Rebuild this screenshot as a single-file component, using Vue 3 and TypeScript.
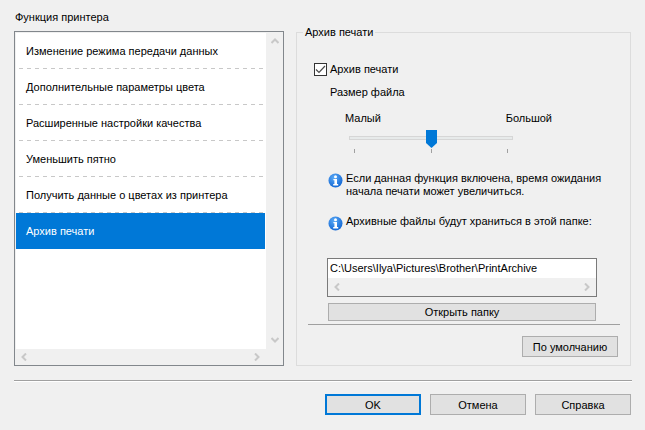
<script setup lang="ts">
const items: string[] = [
  'Изменение режима передачи данных',
  'Дополнительные параметры цвета',
  'Расширенные настройки качества',
  'Уменьшить пятно',
  'Получить данные о цветах из принтера',
  'Архив печати',
]
const selected = 5
</script>

<template>
  <div class="dialog">
    <div class="title">Функция принтера</div>
    <div class="main">
      <div class="listbox">
        <div class="list-view">
          <ul class="list">
            <li v-for="(item, i) in items" :key="item" class="row" :class="{ sel: i === selected }">
              {{ item }}
            </li>
          </ul>
          <div class="vbar">
            <svg width="8" height="6" viewBox="0 0 8 6"><path d="M0.5 5 L4 1.5 L7.5 5" class="arrow" /></svg>
            <svg width="8" height="6" viewBox="0 0 8 6"><path d="M0.5 1 L4 4.5 L7.5 1" class="arrow" /></svg>
          </div>
          <div class="hbar">
            <svg width="6" height="8" viewBox="0 0 6 8"><path d="M5 0.5 L1.5 4 L5 7.5" class="arrow" /></svg>
            <svg width="6" height="8" viewBox="0 0 6 8"><path d="M1 0.5 L4.5 4 L1 7.5" class="arrow" /></svg>
          </div>
        </div>
      </div>
      <section class="group">
        <span class="legend">Архив печати</span>
        <label class="check-row">
          <span class="checkbox">
            <svg width="11" height="11" viewBox="0 0 11 11"><path d="M1 5.5 L4 8.5 L10 2" fill="none" stroke="#4a4a4a" stroke-width="1.2" /></svg>
          </span>
          Архив печати
        </label>
        <div class="size-label">Размер файла</div>
        <div class="scale"><span>Малый</span><span>Большой</span></div>
        <svg class="slider" width="166" height="24" viewBox="0 0 166 24">
          <rect x="0.5" y="6.5" width="163" height="3" fill="#e7eaea" stroke="#d6d6d6" />
          <path d="M77 0 H88 V13 L82.5 18 L77 13 Z" fill="#0078d7" />
          <path d="M5.5 19 V23 M82.5 19 V23 M158.5 19 V23" stroke="#a0a0a0" />
        </svg>
        <div class="info two">
          <svg class="info-icon" width="15" height="15" viewBox="0 0 15 15">
            <defs>
              <radialGradient id="ig" cx="0.4" cy="0.3" r="0.8">
                <stop offset="0" stop-color="#5aa9f5" />
                <stop offset="1" stop-color="#0a5fd0" />
              </radialGradient>
            </defs>
            <circle cx="7.5" cy="7.5" r="7" fill="url(#ig)" />
            <circle cx="7.5" cy="3.8" r="1.5" fill="#fff" />
            <path d="M5.4 6 H9 V11 H10.2 V12.4 H5.2 V11 H6.4 V7.3 H5.4 Z" fill="#fff" />
          </svg>
          <p>Если данная функция включена, время ожидания<br />начала печати может увеличиться.</p>
        </div>
        <div class="info one">
          <svg class="info-icon" width="15" height="15" viewBox="0 0 15 15">
            <circle cx="7.5" cy="7.5" r="7" fill="url(#ig)" />
            <circle cx="7.5" cy="3.8" r="1.5" fill="#fff" />
            <path d="M5.4 6 H9 V11 H10.2 V12.4 H5.2 V11 H6.4 V7.3 H5.4 Z" fill="#fff" />
          </svg>
          <p>Архивные файлы будут храниться в этой папке:</p>
        </div>
        <div class="path-box">
          <div class="path-text">C:\Users\Ilya\Pictures\Brother\PrintArchive</div>
          <div class="path-bar">
            <svg width="6" height="8" viewBox="0 0 6 8"><path d="M5 0.5 L1.5 4 L5 7.5" class="arrow" /></svg>
            <svg width="6" height="8" viewBox="0 0 6 8"><path d="M1 0.5 L4.5 4 L1 7.5" class="arrow" /></svg>
          </div>
        </div>
        <button class="btn open">Открыть папку</button>
        <div class="inner-sep"></div>
        <button class="btn default">По умолчанию</button>
      </section>
    </div>
    <div class="sep"></div>
    <div class="actions">
      <button class="btn action primary">OK</button>
      <button class="btn action">Отмена</button>
      <button class="btn action">Справка</button>
    </div>
  </div>
</template>

<style>
html, body { margin: 0; background: #f0f0f0; }
</style>

<style scoped>
.dialog {
  width: 645px;
  height: 430px;
  box-sizing: border-box;
  padding: 0 14px;
  background: #f0f0f0;
  font-family: "Liberation Sans", Arial, sans-serif;
  font-size: 11px;
  color: #000;
  overflow: hidden;
}
.title { height: 31px; padding: 10px 1px 0; box-sizing: border-box; line-height: 14px; }
.main { display: flex; gap: 12px; height: 335px; }
.listbox {
  width: 270px;
  box-sizing: border-box;
  border: 1px solid #82878c;
  padding: 1px 0 0 1px;
  flex: none;
}
.list-view {
  display: grid;
  grid-template-columns: 250px 18px;
  grid-template-rows: 316px 16px;
  height: 100%;
}
.list { list-style: none; margin: 0; padding: 0 1px 0 0; background: #fff; }
.row {
  height: 36px;
  box-sizing: border-box;
  padding: 0 0 0 10px;
  line-height: 36px;
  background: repeating-linear-gradient(90deg, #c8c8c8 0 4px, transparent 4px 8px) 3px 100% / 244px 1px no-repeat;
}
.row.sel { background: #0078d7; color: #fff; }
.vbar {
  display: flex;
  flex-direction: column;
  justify-content: space-between;
  align-items: center;
  padding: 5px 0 6px;
  box-sizing: border-box;
}
.hbar, .path-bar {
  display: flex;
  justify-content: space-between;
  align-items: center;
}
.hbar { padding: 0 6px 0 5px; }
.arrow { fill: none; stroke: #c8c8c8; stroke-width: 2; }
.group {
  position: relative;
  width: 336px;
  box-sizing: border-box;
  border: 1px solid #dcdcdc;
  margin-top: 1px;
  height: 334px;
  padding-top: 27px;
}
.legend {
  position: absolute;
  left: 6px;
  top: -8px;
  padding: 0 2px;
  background: #f0f0f0;
  line-height: 14px;
}
.check-row { display: flex; align-items: center; height: 18px; margin-left: 17px; gap: 3px; }
.checkbox {
  width: 13px;
  height: 13px;
  box-sizing: border-box;
  border: 1px solid #333;
  background: #fff;
  display: flex;
  align-items: center;
  justify-content: center;
}
.size-label { height: 16px; line-height: 16px; margin: 6px 0 0 33px; }
.scale {
  display: flex;
  justify-content: space-between;
  height: 16px;
  line-height: 16px;
  margin: 10px 0 0 48px;
  width: 207px;
}
.slider { display: block; margin: 4px 0 0 52px; }
.info { display: flex; gap: 3px; margin-left: 31px; }
.info p { margin: 0; line-height: 13px; white-space: nowrap; }
.info-icon { flex: none; margin-top: 1px; }
.info.two { margin-top: 18px; height: 27px; }
.info.one { margin-top: 16px; height: 16px; }
.path-box {
  width: 270px;
  height: 39px;
  box-sizing: border-box;
  margin: 27px 0 0 30px;
  border: 1px solid #7a7a7a;
  background: #f0f0f0;
}
.path-text {
  height: 19px;
  line-height: 18px;
  padding-left: 2px;
  background: #fff;
  border-bottom: 1px solid #fff;
  box-sizing: border-box;
}
.path-bar { height: 18px; padding: 0 6px 0 6px; }
.btn {
  display: block;
  padding: 0;
  box-sizing: border-box;
  background: #e1e1e1;
  border: 1px solid #adadad;
  font: inherit;
  color: inherit;
}
.open { width: 268px; height: 18px; margin: 6px 0 0 31px; line-height: 15px; }
.inner-sep { width: 312px; height: 1px; background: #a0a0a0; margin: 3px 0 0 11px; }
.default { width: 96px; height: 21px; margin: 11px 0 0 225px; }
.sep { height: 1px; margin-top: 14px; width: 618px; background: #a0a0a0; box-shadow: 0 1px 0 #fff; }
.actions { display: flex; justify-content: flex-end; gap: 9px; margin-top: 13px; width: 617px; }
.action { width: 96px; height: 21px; }
.primary { border: 2px solid #0078d7; }
</style>
